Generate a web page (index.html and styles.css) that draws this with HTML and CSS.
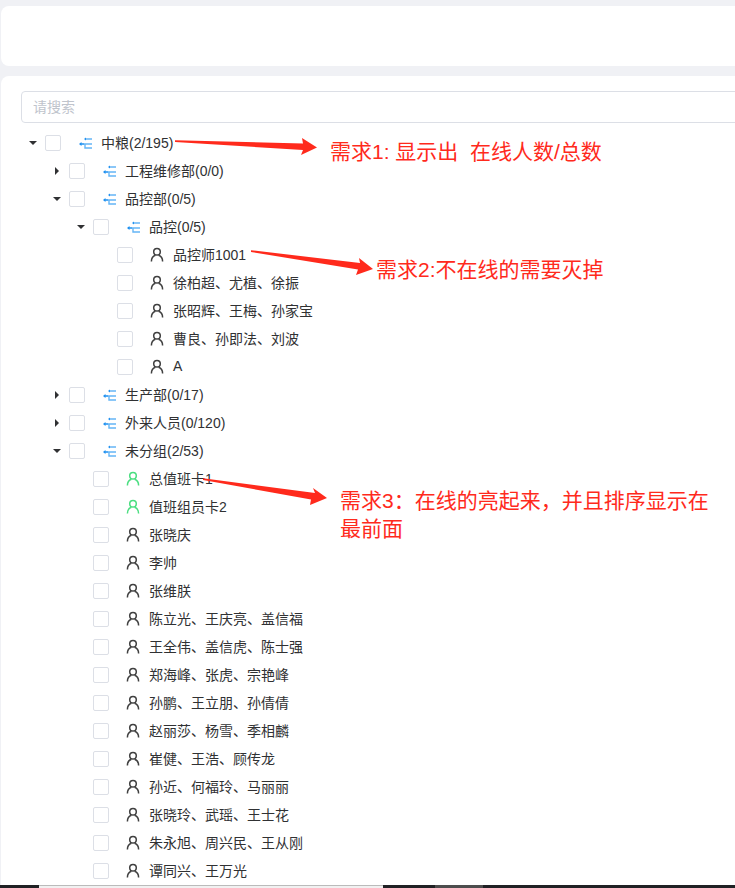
FILE: index.html
```html
<!DOCTYPE html>
<html lang="zh-CN">
    <head>
        <meta charset="utf-8">
        <title>人员树</title>
        <link rel="stylesheet" href="styles.css">
    </head>
    <body>
        <svg class="defs" width="0" height="0">
            <symbol id="group" viewBox="0 0 16 16">
                <path class="groupLines" d="M11 4h4M7 9h8M8 9v4h7"/>
                <path class="groupArrow" d="M7 4 9 2.500V3.400H11V4.600H9V5.500zM2 9 4.500 7V8.300H7V9.700H4.500V11z"/>
            </symbol>
            <symbol id="person" viewBox="0 0 16 16">
                <circle cx="8" cy="4.800" r="3.300"/>
                <path d="M2.400 14.500c0-3.300 2-5.500 4-6.200M13.600 14.500c0-3.300-2-5.500-4-6.200"/>
            </symbol>
        </svg>

        <div class="topCard"></div>

        <div class="mainCard">
            <input class="search" type="text" placeholder="请搜索">

            <div class="tree">
                <div class="row lvl0"><i class="caret down"></i><b class="check"></b><svg class="icon"><use href="#group"/></svg><span>中粮(2/195)</span></div>
                <div class="row lvl1"><i class="caret right"></i><b class="check"></b><svg class="icon"><use href="#group"/></svg><span>工程维修部(0/0)</span></div>
                <div class="row lvl1"><i class="caret down"></i><b class="check"></b><svg class="icon"><use href="#group"/></svg><span>品控部(0/5)</span></div>
                <div class="row lvl2"><i class="caret down"></i><b class="check"></b><svg class="icon"><use href="#group"/></svg><span>品控(0/5)</span></div>
                <div class="row lvl3"><i class="caret"></i><b class="check"></b><svg class="icon user"><use href="#person"/></svg><span>品控师1001</span></div>
                <div class="row lvl3"><i class="caret"></i><b class="check"></b><svg class="icon user"><use href="#person"/></svg><span>徐柏超、尤植、徐振</span></div>
                <div class="row lvl3"><i class="caret"></i><b class="check"></b><svg class="icon user"><use href="#person"/></svg><span>张昭辉、王梅、孙家宝</span></div>
                <div class="row lvl3"><i class="caret"></i><b class="check"></b><svg class="icon user"><use href="#person"/></svg><span>曹良、孙即法、刘波</span></div>
                <div class="row lvl3"><i class="caret"></i><b class="check"></b><svg class="icon user"><use href="#person"/></svg><span>A</span></div>
                <div class="row lvl1"><i class="caret right"></i><b class="check"></b><svg class="icon"><use href="#group"/></svg><span>生产部(0/17)</span></div>
                <div class="row lvl1"><i class="caret right"></i><b class="check"></b><svg class="icon"><use href="#group"/></svg><span>外来人员(0/120)</span></div>
                <div class="row lvl1"><i class="caret down"></i><b class="check"></b><svg class="icon"><use href="#group"/></svg><span>未分组(2/53)</span></div>
                <div class="row lvl2"><i class="caret"></i><b class="check"></b><svg class="icon user online"><use href="#person"/></svg><span>总值班卡1</span></div>
                <div class="row lvl2"><i class="caret"></i><b class="check"></b><svg class="icon user online"><use href="#person"/></svg><span>值班组员卡2</span></div>
                <div class="row lvl2"><i class="caret"></i><b class="check"></b><svg class="icon user"><use href="#person"/></svg><span>张晓庆</span></div>
                <div class="row lvl2"><i class="caret"></i><b class="check"></b><svg class="icon user"><use href="#person"/></svg><span>李帅</span></div>
                <div class="row lvl2"><i class="caret"></i><b class="check"></b><svg class="icon user"><use href="#person"/></svg><span>张维朕</span></div>
                <div class="row lvl2"><i class="caret"></i><b class="check"></b><svg class="icon user"><use href="#person"/></svg><span>陈立光、王庆亮、盖信福</span></div>
                <div class="row lvl2"><i class="caret"></i><b class="check"></b><svg class="icon user"><use href="#person"/></svg><span>王全伟、盖信虎、陈士强</span></div>
                <div class="row lvl2"><i class="caret"></i><b class="check"></b><svg class="icon user"><use href="#person"/></svg><span>郑海峰、张虎、宗艳峰</span></div>
                <div class="row lvl2"><i class="caret"></i><b class="check"></b><svg class="icon user"><use href="#person"/></svg><span>孙鹏、王立朋、孙倩倩</span></div>
                <div class="row lvl2"><i class="caret"></i><b class="check"></b><svg class="icon user"><use href="#person"/></svg><span>赵丽莎、杨雪、季相麟</span></div>
                <div class="row lvl2"><i class="caret"></i><b class="check"></b><svg class="icon user"><use href="#person"/></svg><span>崔健、王浩、顾传龙</span></div>
                <div class="row lvl2"><i class="caret"></i><b class="check"></b><svg class="icon user"><use href="#person"/></svg><span>孙近、何福玲、马丽丽</span></div>
                <div class="row lvl2"><i class="caret"></i><b class="check"></b><svg class="icon user"><use href="#person"/></svg><span>张晓玲、武瑶、王士花</span></div>
                <div class="row lvl2"><i class="caret"></i><b class="check"></b><svg class="icon user"><use href="#person"/></svg><span>朱永旭、周兴民、王从刚</span></div>
                <div class="row lvl2"><i class="caret"></i><b class="check"></b><svg class="icon user"><use href="#person"/></svg><span>谭同兴、王万光</span></div>
            </div>
        </div>

        <div class="taskbar">
            <div class="barDark barA"></div>
            <div class="barLight"></div>
            <div class="barDark barB"></div>
            <div class="barGrey"></div>
            <div class="barDark barC"></div>
        </div>

        <!-- red notes drawn over the screenshot -->
        <svg class="arrows" viewBox="0 0 735 888">
            <polygon points="175,140.300 303,143.500 302,138 317,147.500 301,155 303,150 175,142"/>
            <polygon points="251,250.200 360,263 359,258 373,269 356,275 358,269.500 251,252"/>
            <polygon points="203,478.200 315,493 313,488 327,498 310,505 311,499.500 203,480"/>
        </svg>
        <p class="note note1">需求1: 显示出&nbsp;&nbsp;在线人数/总数</p>
        <p class="note note2">需求2:不在线的需要灭掉</p>
        <p class="note note3">需求3：在线的亮起来，并且排序显示在最前面</p>
    </body>
</html>
```

FILE: styles.css
```css
html, body
{
    height: 100%;
    margin: 0;
}

body
{
    position: relative;
    display: flex;
    flex-direction: column;
    height: 888px;
    overflow: hidden;
    background: #f0f1f5;
    font-family: "Liberation Sans", "Noto Sans CJK SC", sans-serif;
    font-size: 14px;
    color: #303133;
}

.defs
{
    position: absolute;
}

.topCard
{
    height: 60px;
    margin: 6px 0 10px 1px;
    flex: none;
    background: #fff;
    border-radius: 8px 0 0 8px;
}

.mainCard
{
    flex: 1;
    min-height: 0;
    margin-left: 1px;
    padding: 15px 0 0 20px;
    overflow: hidden;
    background: #fff;
    border-radius: 8px 0 0 0;
}

.search
{
    display: block;
    box-sizing: border-box;
    width: 760px;
    height: 32px;
    padding: 0 11px;
    margin-bottom: 6px;
    border: 1px solid #dcdfe6;
    border-radius: 4px;
    font: inherit;
}

.search::placeholder
{
    color: #c0c4cc;
}

.row
{
    display: flex;
    align-items: center;
    height: 28px;
    white-space: nowrap;
}

.row span
{
    margin-bottom: 2px;
}

.lvl1 { padding-left: 24px; }
.lvl2 { padding-left: 48px; }
.lvl3 { padding-left: 72px; }

.caret
{
    display: flex;
    justify-content: center;
    align-items: center;
    width: 24px;
    flex: none;
}

.caret.down::before
{
    content: "";
    border: 4px solid transparent;
    border-top-color: #303133;
    border-bottom-width: 0;
}

.caret.right::before
{
    content: "";
    border: 4px solid transparent;
    border-left-color: #303133;
    border-right-width: 0;
}

.check
{
    box-sizing: border-box;
    width: 16px;
    height: 16px;
    flex: none;
    background: #fff;
    border: 1px solid #dcdfe6;
    border-radius: 2px;
}

.icon
{
    width: 16px;
    height: 16px;
    flex: none;
    margin: 0 8px 0 16px;
    fill: none;
}

.groupLines
{
    fill: none;
    stroke: #64b5f6;
    stroke-width: 1.4;
}

.groupArrow
{
    fill: #1e90f0;
}

.user
{
    stroke: #404040;
    stroke-width: 1.5;
}

.online
{
    stroke: #4ade80;
}

.taskbar
{
    display: flex;
    height: 3px;
    flex: none;
}

.barDark { background: #202124; }
.barA { width: 39px; }
.barB { width: 52px; }
.barC { flex: 1; }
.barLight { box-sizing: border-box; width: 344px; background: #f1f1f1; border-top: 1px solid #bbb; }
.barGrey { width: 48px; background: #4d4d4d; }

.arrows
{
    position: absolute;
    top: 0;
    left: 0;
    width: 735px;
    height: 888px;
    fill: #ff2a1c;
}

.note
{
    position: absolute;
    margin: 0;
    font-size: 21px;
    line-height: 28px;
    color: #ff2a1c;
}

.note1 { left: 330px; top: 138px; }
.note2 { left: 376px; top: 256px; }
.note3 { left: 340px; top: 487px; width: 380px; }
```
